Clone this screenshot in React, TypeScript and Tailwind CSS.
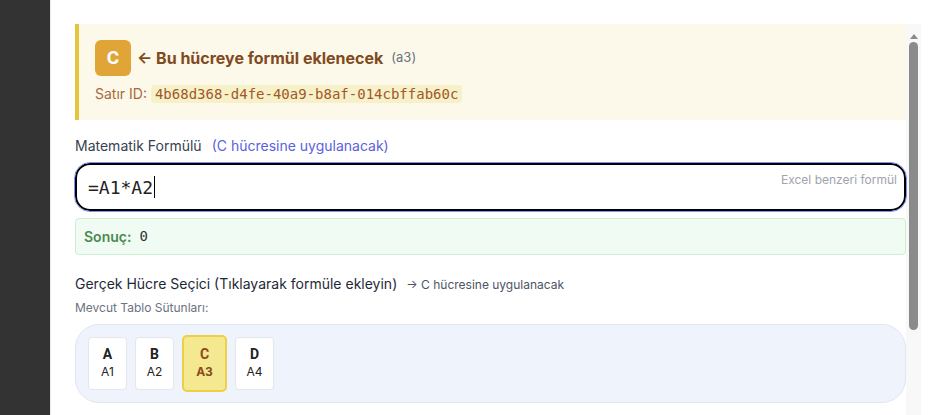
import { useState } from 'react';

type Cell = {
  key: string;
  ref: string;
};

const CELLS: Cell[] = [
  { key: 'A', ref: 'A1' },
  { key: 'B', ref: 'A2' },
  { key: 'C', ref: 'A3' },
  { key: 'D', ref: 'A4' },
];

const SANS = "font-['Inter','Noto_Sans',sans-serif]";
const MONO = "font-['DejaVu_Sans_Mono','Liberation_Mono',monospace]";
const NARROW = "font-['Roboto','Liberation_Sans',sans-serif]";

const ScrollBar = () => (
  <div className="flex w-[15px] shrink-0 flex-col items-center bg-[#f8f8f8]">
    <div className="flex h-[18px] w-full items-end justify-center pb-[3px]">
      <div className="h-0 w-0 border-x-[4px] border-b-[5px] border-x-transparent border-b-[#8a8a8a]" />
    </div>
    <div className="h-[288px] w-[9px] rounded-full bg-[#8b8b8b]" />
  </div>
);

const App = () => {
  const [formula] = useState('=A1*A2');
  const [selected, setSelected] = useState('C');

  return (
    <div className={`flex h-[415px] w-[930px] overflow-hidden bg-white ${SANS}`}>
      <div className="w-[50px] shrink-0 bg-[#333333]" />
      <div className="flex flex-1 flex-col border-l border-[#e4eaf3] pt-[24px]">
        <div className="flex min-h-0 flex-1">
          <div className="flex min-w-0 flex-1 flex-col pl-[24px]">
            {/* target cell banner */}
            <div className="flex h-[96px] flex-col gap-[9px] border-l-4 border-[#e6c43f] bg-[#fcf9ea] pl-4 pt-4">
              <div className="flex h-[36px] items-center gap-[6px]">
                <div
                  className={`flex h-[36px] w-[36px] items-center justify-center rounded-md bg-[#e0a536] text-[19px] font-bold text-white ${NARROW}`}
                >
                  C
                </div>
                <span className="text-[16px] font-bold text-[#7f4a1e]">
                  ← Bu hücreye formül eklenecek
                </span>
                <span className="ml-[2px] text-[13px] text-[#6b7280]">(a3)</span>
              </div>
              <div className="flex h-[18px] items-center gap-[4px] text-[14px] leading-[18px] text-[#a86a3c]">
                <span>Satır ID:</span>
                <code
                  className={`rounded-[4px] bg-[#f7f1c9] px-[4px] text-[14px] leading-[18px] text-[#a0582a] ${MONO}`}
                >
                  4b68d368-d4fe-40a9-b8af-014cbffab60c
                </code>
              </div>
            </div>

            {/* formula */}
            <div className="mt-4 flex items-center gap-[10px] text-[14px] leading-[20px]">
              <span className="text-[#374151]">Matematik Formülü</span>
              <span className="text-[#5b5fe0]">(C hücresine uygulanacak)</span>
            </div>
            <div className="relative mt-[7px] h-[48px] rounded-[15px] border-2 border-black px-[11px] outline outline-1 outline-offset-0 outline-[#7c93f3]">
              <div className={`flex h-full items-center text-[18px] text-[#222] ${MONO}`}>
                {formula}
                <span className="ml-[1px] h-[22px] w-[1px] bg-black" />
              </div>
              <span className="absolute right-[7px] top-[7px] text-[12px] leading-[16px] text-[#a0a4ad]">
                Excel benzeri formül
              </span>
            </div>

            <div className="mt-[7px] flex h-[37px] items-center gap-[8px] rounded-[4px] border border-[#c9f0d2] bg-[#f0fcf3] px-[8px]">
              <span className="text-[14px] font-semibold text-[#4b8a4e]">Sonuç:</span>
              <span className={`text-[14px] text-[#333] ${MONO}`}>0</span>
            </div>

            {/* cell picker */}
            <div className="mt-[18px] flex items-baseline gap-[9px]">
              <span className="text-[14px] text-[#1f2937]">
                Gerçek Hücre Seçici (Tıklayarak formüle ekleyin)
              </span>
              <span className="text-[12px] text-[#4b5563]">→ C hücresine uygulanacak</span>
            </div>
            <div className="mt-[5px] text-[12px] text-[#6b7280]">Mevcut Tablo Sütunları:</div>

            <div className="mt-[7px] flex h-[79px] items-center gap-[8px] rounded-[24px] border border-[#dfe6f1] bg-[#eff4fc] px-[12px]">
              {CELLS.map((cell) => {
                const active = cell.key === selected;
                return (
                  <button
                    key={cell.key}
                    type="button"
                    onClick={() => setSelected(cell.key)}
                    className={
                      active
                        ? 'flex h-[57px] w-[45px] flex-col items-center justify-center rounded-[5px] border-2 border-[#edd046] bg-[#f4e890] text-[#8a4b1f]'
                        : 'flex h-[53px] w-[39px] flex-col items-center justify-center rounded-[4px] border border-[#e3e6ea] bg-white text-[#222]'
                    }
                  >
                    <span className={`text-[14px] font-bold leading-[17px] ${NARROW}`}>{cell.key}</span>
                    <span className={`text-[12px] leading-[18px] ${active ? 'font-bold' : ''}`}>
                      {cell.ref}
                    </span>
                  </button>
                );
              })}
            </div>
          </div>
          <ScrollBar />
          <div className="w-[9px] shrink-0" />
        </div>
      </div>
    </div>
  );
};

export default App;
